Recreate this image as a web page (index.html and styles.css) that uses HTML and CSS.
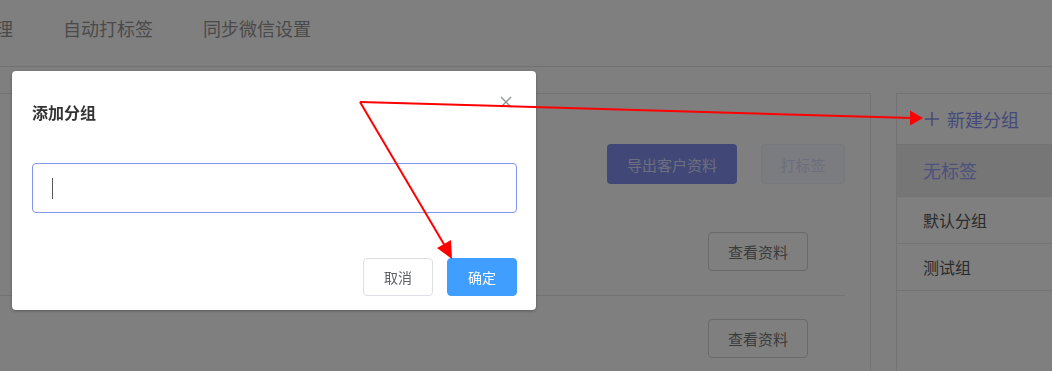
FILE: index.html
```
<!DOCTYPE html>
<html lang="zh">

<head>
    <meta charset="utf-8">
    <meta name="viewport" content="width=device-width, initial-scale=1.0">
    <title>客户分组</title>
    <link rel="stylesheet" href="styles.css">
</head>

<body>

    <header class="topnav">
        <a class="nav-item">客户管理</a>
        <a class="nav-item">自动打标签</a>
        <a class="nav-item">同步微信设置</a>
    </header>

    <main class="page">
        <section class="customers">
            <div class="toolbar">
                <button class="btn-export">导出客户资料</button>
                <button class="btn-tag">打标签</button>
            </div>
            <div class="row">
                <button class="btn-view">查看资料</button>
            </div>
            <div class="row">
                <button class="btn-view">查看资料</button>
            </div>
        </section>

        <aside class="groups">
            <div class="group-new">
                <svg class="plus" width="14" height="14" viewBox="0 0 14 14">
                    <path d="M7 0 V14 M0 7 H14" stroke="#8a94f0" stroke-width="1.5" fill="none" />
                </svg>
                新建分组
            </div>
            <div class="group-item active">无标签</div>
            <div class="group-item">默认分组</div>
            <div class="group-item">测试组</div>
        </aside>
    </main>

    <div class="mask"></div>

    <div class="dialog">
        <div class="dialog-header">
            <span class="dialog-title">添加分组</span>
            <span class="dialog-close">
                <svg width="12" height="12" viewBox="0 0 12 12">
                    <path d="M1 1 L11 11 M11 1 L1 11" stroke="#909399" stroke-width="1.3" fill="none" />
                </svg>
            </span>
        </div>
        <div class="dialog-body">
            <div class="input"><span class="caret"></span></div>
        </div>
        <div class="dialog-footer">
            <button class="btn-cancel">取消</button>
            <button class="btn-ok">确定</button>
        </div>
    </div>

    <!-- annotation arrows -->
    <svg class="marks" width="1052" height="371" viewBox="0 0 1052 371">
        <g stroke="#ff0000" stroke-width="2" fill="none">
            <line x1="360" y1="102" x2="912" y2="118" />
            <line x1="360" y1="102" x2="445" y2="246" />
        </g>
        <g fill="#ff0000">
            <polygon points="923,118 910,110.5 910,125.5" />
            <polygon points="452,259 437,248 451,240" />
        </g>
    </svg>

</body>

</html>
```

FILE: styles.css
```
body {
    margin: 0;
    width: 1052px;
    height: 371px;
    overflow: hidden;
    background-color: #fff;
    font-family: "Noto Sans CJK SC", "Noto Sans", sans-serif;
}

button {
    font-family: "Noto Sans CJK SC", "Noto Sans", sans-serif;
    cursor: pointer;
}

.topnav {
    display: flex;
    height: 66px;
    border-bottom: 1px solid #e2e2e2;
    margin-left: -84px;
}

.nav-item {
    font-size: 18px;
    line-height: 56px;
    color: #959595;
    padding: 0 25px;
}

.page {
    display: flex;
    gap: 25px;
    padding-top: 26px;
    margin-left: -40px;
}

.customers {
    flex: 1;
    height: 278px;
    border-top: 1px solid #e6e6e6;
    border-right: 1px solid #e6e6e6;
    padding-right: 25px;
}

.toolbar {
    display: flex;
    justify-content: flex-end;
    gap: 24px;
    padding: 50px 0 25px;
}

.btn-export,
.btn-tag {
    height: 40px;
    border-radius: 4px;
    font-size: 15px;
}

.btn-export {
    width: 130px;
    background-color: #8290ee;
    border: none;
    color: #d8deff;
}

.btn-tag {
    width: 84px;
    background-color: #f6f8ff;
    border: 1px solid #eef1ff;
    color: #d6dcfa;
}

.row {
    display: flex;
    justify-content: flex-end;
    padding: 23px 37px 24px 0;
    border-bottom: 1px solid #e6e6e6;
}

.row:last-child {
    border-bottom: none;
}

.btn-view {
    width: 100px;
    height: 39px;
    background-color: #fff;
    border: 1px solid #d4d4d4;
    border-radius: 4px;
    color: #777;
    font-size: 15px;
}

.groups {
    flex: 0 0 155px;
    height: 278px;
    border-top: 1px solid #e6e6e6;
    border-left: 1px solid #e6e6e6;
}

.group-new {
    display: flex;
    align-items: center;
    height: 50px;
    padding-left: 28px;
    font-size: 18px;
    color: #8a94f0;
    border-bottom: 1px solid #e6e6e6;
}

.plus {
    margin-right: 8px;
}

.group-item {
    height: 46px;
    line-height: 46px;
    padding-left: 26px;
    font-size: 16px;
    color: #555;
    border-bottom: 1px solid #e6e6e6;
}

.group-item.active {
    height: 51px;
    line-height: 51px;
    font-size: 18px;
    background-color: #ececec;
    color: #9aa4f8;
}

.mask {
    position: fixed;
    inset: 0;
    background-color: rgba(0, 0, 0, 0.5);
}

.dialog {
    position: absolute;
    left: 12px;
    top: 71px;
    width: 524px;
    height: 239px;
    box-sizing: border-box;
    background-color: #fff;
    border-radius: 4px;
    box-shadow: 0 1px 3px rgba(0, 0, 0, 0.3);
    padding: 0 19px 0 20px;
}

.dialog-header {
    display: flex;
    justify-content: space-between;
    padding-top: 29px;
}

.dialog-title {
    font-size: 16px;
    line-height: 24px;
    font-weight: bold;
    color: #333;
}

.dialog-close {
    margin-top: -11px;
    margin-right: 5px;
    height: 12px;
}

.dialog-body {
    padding-top: 39px;
}

.input {
    height: 50px;
    box-sizing: border-box;
    border: 1px solid #8394f1;
    border-radius: 4px;
    padding: 14px 0 0 19px;
}

.caret {
    display: block;
    width: 1px;
    height: 21px;
    background-color: #555;
}

.dialog-footer {
    display: flex;
    justify-content: flex-end;
    gap: 14px;
    padding-top: 45px;
}

.btn-cancel,
.btn-ok {
    width: 70px;
    height: 38px;
    border-radius: 4px;
    font-size: 14px;
}

.btn-cancel {
    background-color: #fff;
    border: 1px solid #dcdfe6;
    color: #606266;
}

.btn-ok {
    background-color: #409eff;
    border: 1px solid #409eff;
    color: #fff;
}

.marks {
    position: absolute;
    left: 0;
    top: 0;
}
```
